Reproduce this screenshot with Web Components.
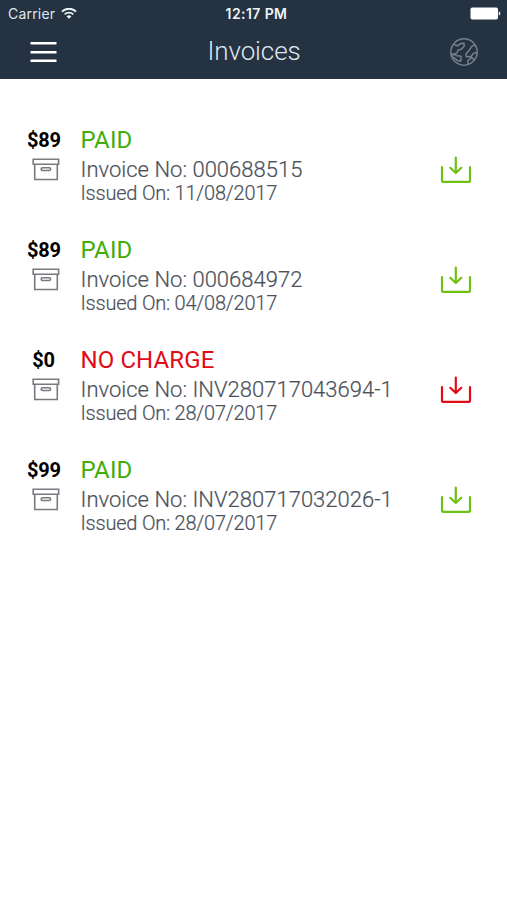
<!DOCTYPE html>
<html lang="en">
<head>
<meta charset="utf-8">
<title>Invoices</title>
<style>
body {
  margin: 0;
  background: #fff;
  font-family: Roboto, "Liberation Sans", sans-serif;
}
</style>
</head>
<body>
<status-bar carrier="Carrier" time="12:17 PM"></status-bar>
<nav-header>Invoices</nav-header>
<invoice-list>
  <invoice-item amount="$89" status="PAID" number="000688515" issued="11/08/2017"></invoice-item>
  <invoice-item amount="$89" status="PAID" number="000684972" issued="04/08/2017"></invoice-item>
  <invoice-item amount="$0" status="NO CHARGE" number="INV280717043694-1" issued="28/07/2017" alert></invoice-item>
  <invoice-item amount="$99" status="PAID" number="INV280717032026-1" issued="28/07/2017"></invoice-item>
</invoice-list>

<script>
// shared base: attaches the shadow root and renders the html getter
class BaseElement extends HTMLElement {
  constructor() {
    super();
    this.template = document.createElement("template");
    this.attachShadow({ mode: "open" });
  }
  connectedCallback() {
    this.template.innerHTML = this.html;
    this.shadowRoot.innerHTML = "";
    this.shadowRoot.appendChild(this.template.content.cloneNode(true));
  }
}

/**
 * `status-bar`
 * carrier, clock and battery
 */
class StatusBar extends BaseElement {
  static get tag() {
    return "status-bar";
  }
  get html() {
    return `
<style>
:host {
  display: grid;
  grid-template-columns: 1fr auto 1fr;
  align-items: center;
  height: 27px;
  padding: 0 6px 0 8px;
  background: #243242;
  color: #dfe7ee;
  font: 400 14px/27px Inter, Roboto, sans-serif;
}
.carrier {
  display: flex;
  align-items: center;
  gap: 6px;
  letter-spacing: 0.2px;
}
.time {
  padding: 1px 0 0 4px;
  line-height: 26px;
  font-weight: 600;
  letter-spacing: 0.4px;
  color: #eef3f7;
}
.battery {
  justify-self: end;
}
svg {
  display: block;
}
</style>
<div class="carrier">
  <span>${this.getAttribute("carrier")}</span>
  <svg width="16" height="12" viewBox="0 0 16 12" fill="none" stroke="#eef3f7" stroke-width="1.9">
    <path d="M1 3.6a10 10 0 0 1 14 0M3.7 6.4a6.2 6.2 0 0 1 8.6 0"/>
    <path d="M8 10.8L5.6 8.4a3.5 3.5 0 0 1 4.8 0z" fill="#eef3f7" stroke="none"/>
  </svg>
</div>
<span class="time">${this.getAttribute("time")}</span>
<svg class="battery" width="31" height="13" viewBox="0 0 31 13" fill="#fff">
  <rect x="0.5" y="0.5" width="27.5" height="12" rx="1.8"/>
  <path d="M28.8 4.5c2 .6 2 3.4 0 4z"/>
</svg>`;
  }
}
window.customElements.define(StatusBar.tag, StatusBar);

/**
 * `nav-header`
 * menu button, slotted title and globe
 */
class NavHeader extends BaseElement {
  static get tag() {
    return "nav-header";
  }
  get html() {
    return `
<style>
:host {
  display: grid;
  grid-template-columns: 1fr auto 1fr;
  align-items: center;
  height: 52px;
  padding: 0 28px 0 30px;
  background: #243242;
  color: #dfe7ee;
}
.title {
  font-size: 26px;
  line-height: 48px;
  font-weight: 300;
  letter-spacing: -0.1px;
  margin: 0 1px 4px 0;
}
.globe {
  justify-self: end;
  margin-bottom: 2px;
}
svg {
  display: block;
}
</style>
<svg width="27" height="22" viewBox="0 0 27 22" fill="#fff">
  <path d="M.5 0h26v2.6H.5zM.5 9h26v2.6H.5zM.5 17.4h26V20H.5z"/>
</svg>
<span class="title"><slot></slot></span>
<svg class="globe" width="30" height="30" viewBox="0 0 30 30" fill="none" stroke="#74808c" stroke-width="1.5" stroke-linejoin="round" stroke-linecap="round">
  <circle cx="15" cy="15" r="13.2"/>
  <path d="M5.2 7.6L8.6 8.8l3.2-2.4 3.2-.2.2 3-3.4 3.4-2.6.4-1.4 3.2-4.8 1.2"/>
  <path d="M2.4 18.2l2.8-1 2.6 1.6 4.2.4-.2 5-3.6-.8-4-3.4"/>
  <path d="M26.2 8.2l-3 .6-3.4 5-2.8 3.2.4 2.8 4.2-.2.4 1.6-3.2 2.6.2 3M27.8 15.6l-3.4.8-2.4 3.4 2.6 2.6"/>
</svg>`;
  }
}
window.customElements.define(NavHeader.tag, NavHeader);

/**
 * `invoice-list`
 */
class InvoiceList extends BaseElement {
  static get tag() {
    return "invoice-list";
  }
  get html() {
    return `
<style>
:host {
  display: flex;
  flex-direction: column;
  gap: 30px;
  padding: 46px 35px 30px 27px;
}
</style>
<slot></slot>`;
  }
}
window.customElements.define(InvoiceList.tag, InvoiceList);

/**
 * `invoice-item`
 * `alert` turns the status and the download icon red
 */
class InvoiceItem extends BaseElement {
  static get tag() {
    return "invoice-item";
  }
  get html() {
    return `
<style>
:host {
  --status: #3fad0a;
  --download: #6fc014;
  display: grid;
  grid-template-columns: 53.5px 1fr auto;
  height: 80px;
  color: #4b515b;
}
:host([alert]) {
  --status: #e20a17;
  --download: #e20a17;
}
.side {
  display: flex;
  flex-direction: column;
}
.amount {
  width: 33px;
  line-height: 30px;
  font-size: 20px;
  font-weight: 700;
  letter-spacing: -0.2px;
  text-align: center;
  color: #000;
}
.box {
  margin: 3px 0 0 5px;
}
.status {
  font-size: 24px;
  line-height: 30px;
  letter-spacing: 0.1px;
  color: var(--status);
}
.number,
.issued {
  font-weight: 300;
  white-space: nowrap;
  -webkit-text-stroke: 0.2px currentColor;
}
.number {
  font-size: 22px;
  line-height: 28px;
  padding-top: 1px;
  letter-spacing: 0.02px;
}
.issued {
  font-size: 20px;
  line-height: 19px;
  letter-spacing: -0.22px;
}
.download {
  margin-top: 31px;
  color: var(--download);
}
svg {
  display: block;
}
</style>
<div class="side">
  <div class="amount">${this.getAttribute("amount")}</div>
  <svg class="box" width="28" height="23" viewBox="0 0 28 23" fill="none" stroke="#777a7e" stroke-width="1.6">
    <path d="M1.2 1.2h25.4v5H1.2zM2.7 6.2v15.3h22.6V6.2"/>
    <rect x="9.2" y="9.7" width="9.4" height="2.8" rx="1.4"/>
  </svg>
</div>
<div class="text">
  <div class="status">${this.getAttribute("status")}</div>
  <div class="number">Invoice No: ${this.getAttribute("number")}</div>
  <div class="issued">Issued On: ${this.getAttribute("issued")}</div>
</div>
<svg class="download" width="32" height="28" viewBox="0 0 32 28" fill="none" stroke="currentColor" stroke-width="2.2" stroke-linecap="round" stroke-linejoin="round">
  <path d="M2 11v13.4q0 1.4 1.4 1.4h25.2q1.4 0 1.4-1.4V11"/>
  <path d="M15.8 1.5v15.2M10.3 11.8l5.5 5.2 5.5-5.2"/>
</svg>`;
  }
}
window.customElements.define(InvoiceItem.tag, InvoiceItem);
</script>
</body>
</html>
